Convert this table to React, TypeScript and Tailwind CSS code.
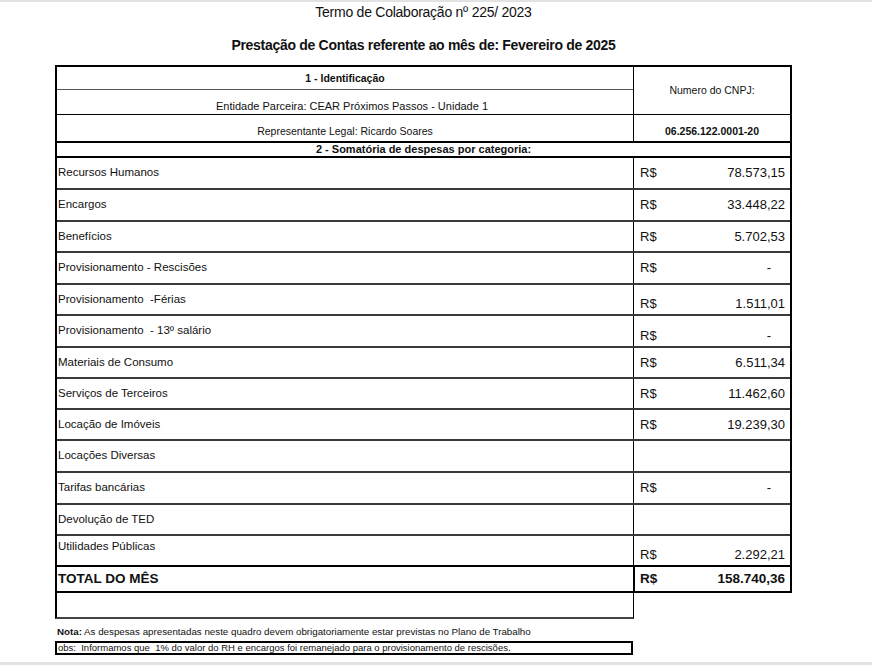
import React from 'react';

interface Row {
  label: string;
  value?: string;
  h: string;
  align?: 'center' | 'bottom';
  labelTop?: boolean;
  noCurrency?: boolean;
  last?: boolean;
}

const rows: Row[] = [
  { label: 'Recursos Humanos', value: '78.573,15', h: 'h-[32px]' },
  { label: 'Encargos', value: '33.448,22', h: 'h-[32px]' },
  { label: 'Benefícios', value: '5.702,53', h: 'h-[31px]' },
  { label: 'Provisionamento - Rescisões', value: '-', h: 'h-[32px]' },
  { label: 'Provisionamento  -Férias', value: '1.511,01', h: 'h-[31px]', align: 'bottom' },
  { label: 'Provisionamento  - 13º salário', value: '-', h: 'h-[32px]', align: 'bottom' },
  { label: 'Materiais de Consumo', value: '6.511,34', h: 'h-[31px]' },
  { label: 'Serviços de Terceiros', value: '11.462,60', h: 'h-[31px]' },
  { label: 'Locação de Imóveis', value: '19.239,30', h: 'h-[31px]' },
  { label: 'Locações Diversas', h: 'h-[32px]', noCurrency: true },
  { label: 'Tarifas bancárias', value: '-', h: 'h-[32px]' },
  { label: 'Devolução de TED', h: 'h-[31px]', noCurrency: true },
  { label: 'Utilidades Públicas', value: '2.292,21', h: 'h-[29px]', align: 'bottom', labelTop: true, last: true },
];

const DataRow = ({ row }: { row: Row }) => (
  <div className={`flex ${row.h} ${row.last ? '' : 'border-b-2 border-[#3a3a3a]'}`}>
    <div
      className={`w-[576px] flex pl-[1px] text-[11.5px] whitespace-pre ${row.labelTop ? 'items-start pt-[2px]' : 'items-center'}`}
    >
      {row.label}
    </div>
    <div
      className={`flex-1 border-l border-black flex justify-between pl-[6px] pr-[5px] text-[13px] ${
        row.align === 'bottom' ? 'items-end pb-[1px]' : 'items-center'
      }`}
    >
      {!row.noCurrency && <span>R$</span>}
      {row.value && <span className={row.value === '-' ? 'pr-[14px]' : ''}>{row.value}</span>}
    </div>
  </div>
);

export default function App() {
  return (
    <div
      className="w-[872px] h-[665px] bg-white text-[#111] flex flex-col"
      style={{ fontFamily: '"Liberation Sans", Arial, sans-serif' }}
    >
      <div className="h-[2px] bg-[#e2e2e2]" />

      {/* Cabeçalho */}
      <div className="ml-[55px] w-[737px] flex flex-col items-center">
        <div className="mt-[2px] text-[14px] leading-[16px] tracking-[-0.25px]">Termo de Colaboração nº 225/ 2023</div>
        <div className="mt-[17px] text-[14px] leading-[16px] font-bold tracking-[-0.3px]">
          Prestação de Contas referente ao mês de: Fevereiro de 2025
        </div>
      </div>

      {/* Tabela principal */}
      <div className="mt-[12px] ml-[55px] w-[737px] border-2 border-black">
        {/* 1 - Identificação */}
        <div className="flex border-b-2 border-black">
          <div className="w-[576px] flex flex-col text-[10.5px]">
            <div className="h-[23px] border-b border-[#555] flex items-end justify-center pb-[2px] font-bold">
              1 - Identificação
            </div>
            <div className="h-[25px] border-b border-black flex items-end justify-center pl-[14px] text-[11px]">
              Entidade Parceira: CEAR Próximos Passos - Unidade 1
            </div>
            <div className="h-[26px] flex items-end justify-center pb-[1px]">Representante Legal: Ricardo Soares</div>
          </div>
          <div className="flex-1 border-l border-black flex flex-col text-[10.5px]">
            <div className="h-[48px] border-b border-black flex items-center justify-center">Numero do CNPJ:</div>
            <div className="h-[26px] flex items-end justify-center pb-[1px] font-bold">06.256.122.0001-20</div>
          </div>
        </div>

        {/* 2 - Somatória */}
        <div className="h-[15px] border-b-2 border-black flex items-center justify-center text-[11px] font-bold leading-none">
          2 - Somatória de despesas por categoria:
        </div>

        {rows.map((r) => (
          <DataRow key={r.label} row={r} />
        ))}

        {/* Total */}
        <div className="flex h-[26px] border-t-2 border-black font-bold">
          <div className="w-[576px] flex items-center pl-[1px] text-[13.5px]">TOTAL DO MÊS</div>
          <div className="flex-1 border-l-2 border-black flex items-center justify-between pl-[5px] pr-[5px] text-[13.5px]">
            <span>R$</span>
            <span>158.740,36</span>
          </div>
        </div>
      </div>

      <div className="ml-[55px] w-[579px] h-[26px] border-l-2 border-r border-b-2 border-l-black border-r-black border-b-[#444]" />

      {/* Notas */}
      <div className="ml-[57px] mt-[7px] text-[9.75px] leading-[12px]">
        <span className="font-bold">Nota:</span> As despesas apresentadas neste quadro devem obrigatoriamente estar
        previstas no Plano de Trabalho
      </div>
      <div className="ml-[55px] mt-[3px] w-[578px] h-[14px] border-2 border-black flex items-center pl-[1px] text-[9.5px] leading-none whitespace-pre">
        {'obs:  Informamos que  1% do valor do RH e encargos foi remanejado para o provisionamento de rescisões.'}
      </div>

      <div className="mt-auto h-[3px] bg-[#e2e2e2]" />
    </div>
  );
}
